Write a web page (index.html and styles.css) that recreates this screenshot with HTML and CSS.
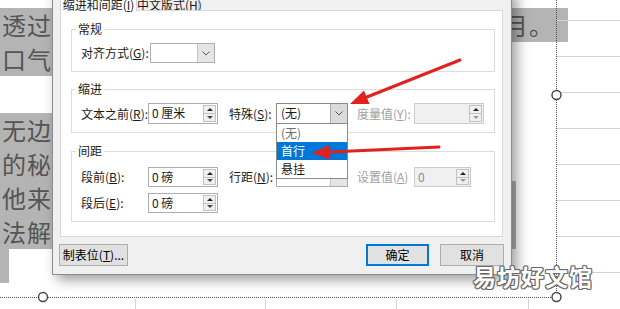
FILE: index.html
```html
<!DOCTYPE html>
<html lang="zh-CN">
<head>
    <meta charset="UTF-8">
    <meta name="viewport" content="width=device-width, initial-scale=1.0">
    <title>段落</title>
    <link rel="stylesheet" href="styles.css">
</head>
<body>
<div class="page">
    <!-- document behind the dialog -->
    <div class="doc">
        <div class="line hl full"><span>透过</span><span class="tail">月。</span></div>
        <div class="line hl w2"><span>口气</span></div>
        <div class="para">
            <div class="line hl w3"><span>无边</span></div>
            <div class="line hl w3"><span>的秘</span></div>
            <div class="line hl w4"><span>他来</span></div>
            <div class="line hl w4"><span>法解</span></div>
            <div class="line"><span class="hl stub"></span></div>
        </div>
    </div>

    <svg class="frame" width="620" height="309" viewBox="0 0 620 309">
        <g stroke="#d3d3d3" stroke-width="1">
            <line x1="557" y1="20.5" x2="620" y2="20.5"/>
            <line x1="557" y1="56.5" x2="620" y2="56.5"/>
            <line x1="557" y1="92.5" x2="620" y2="92.5"/>
            <line x1="557" y1="128.5" x2="620" y2="128.5"/>
            <line x1="557" y1="164.5" x2="620" y2="164.5"/>
            <line x1="557" y1="200.5" x2="620" y2="200.5"/>
            <line x1="557" y1="236.5" x2="620" y2="236.5"/>
            <line x1="557" y1="272.5" x2="620" y2="272.5"/>
            <line x1="135.5" y1="299" x2="135.5" y2="309"/>
            <line x1="265.5" y1="299" x2="265.5" y2="309"/>
            <line x1="396.5" y1="299" x2="396.5" y2="309"/>
            <line x1="528.5" y1="299" x2="528.5" y2="309"/>
        </g>
        <g stroke="#505050" stroke-width="1" stroke-dasharray="1 1" fill="none">
            <line x1="556.5" y1="0" x2="556.5" y2="297"/>
            <line x1="0" y1="297.5" x2="556" y2="297.5"/>
        </g>
        <g fill="#fff" stroke="#444" stroke-width="1.4">
            <circle cx="43" cy="297" r="4.5"/>
            <circle cx="556.5" cy="297" r="4.5"/>
            <circle cx="556.5" cy="95" r="4.5"/>
        </g>
    </svg>

    <div class="dialog">
        <div class="tabs">
            <div class="tab active">缩进和间距(<u>I</u>)</div>
            <div class="tab">中文版式(<u>H</u>)</div>
        </div>

        <div class="panel">
            <fieldset class="group">
                <legend>常规</legend>
                <div class="row">
                    <label>对齐方式(<u>G</u>):</label>
                    <div class="combo short">
                        <span class="val"></span>
                        <span class="drop"><svg width="8" height="5"><polyline points="0.5,0.5 4,4 7.5,0.5" fill="none" stroke="#555"/></svg></span>
                    </div>
                </div>
            </fieldset>

            <fieldset class="group mid">
                <legend>缩进</legend>
                <div class="row">
                    <label>文本之前(<u>R</u>):</label>
                    <div class="spin">
                        <span class="val">0 厘米</span>
                        <span class="spin-btns"><b><i class="up"></i></b><b><i class="down"></i></b></span>
                    </div>
                    <label class="pad">特殊(<u>S</u>):</label>
                    <div class="combo open">
                        <span class="val">(无)</span>
                        <span class="drop hot"><svg width="8" height="5"><polyline points="0.5,0.5 4,4 7.5,0.5" fill="none" stroke="#555"/></svg></span>
                        <div class="list">
                            <div class="dim">(无)</div>
                            <div class="sel">首行</div>
                            <div>悬挂</div>
                        </div>
                    </div>
                    <label class="pad2 off">度量值(<u>Y</u>):</label>
                    <div class="spin dis">
                        <span class="val"></span>
                        <span class="spin-btns"><b><i class="up"></i></b><b><i class="down"></i></b></span>
                    </div>
                </div>
            </fieldset>

            <fieldset class="group last">
                <legend>间距</legend>
                <div class="row">
                    <label>段前(<u>B</u>):</label>
                    <div class="spin">
                        <span class="val">0 磅</span>
                        <span class="spin-btns"><b><i class="up"></i></b><b><i class="down"></i></b></span>
                    </div>
                    <label class="pad">行距(<u>N</u>):</label>
                    <div class="combo">
                        <span class="val"></span>
                        <span class="drop"><svg width="8" height="5"><polyline points="0.5,0.5 4,4 7.5,0.5" fill="none" stroke="#555"/></svg></span>
                    </div>
                    <label class="pad2 off">设置值(<u>A</u>)</label>
                    <div class="spin dis narrow">
                        <span class="val">0</span>
                        <span class="spin-btns"><b><i class="up"></i></b><b><i class="down"></i></b></span>
                    </div>
                </div>
                <div class="row">
                    <label>段后(<u>E</u>):</label>
                    <div class="spin">
                        <span class="val">0 磅</span>
                        <span class="spin-btns"><b><i class="up"></i></b><b><i class="down"></i></b></span>
                    </div>
                </div>
            </fieldset>
        </div>

        <div class="buttons">
            <button class="btn wide">制表位(<u>T</u>)...</button>
            <button class="btn primary">确定</button>
            <button class="btn">取消</button>
        </div>
    </div>

    <svg class="arrows" width="620" height="309" viewBox="0 0 620 309">
        <g stroke="#e3211f" stroke-width="3" stroke-linecap="round" fill="#e3211f">
            <line x1="460" y1="60" x2="367" y2="97"/>
            <line x1="439" y1="147" x2="330" y2="152"/>
        </g>
        <g fill="#e3211f">
            <polygon points="350,104 369.5,104 364,90.5"/>
            <polygon points="312,153 330.5,159.5 329.5,145"/>
        </g>
    </svg>

    <div class="watermark">易坊好文馆</div>
</div>
</body>
</html>
```

FILE: styles.css
```css
* {
    box-sizing: border-box;
}

body {
    margin: 0;
    background: #fff;
    font-family: "Noto Sans CJK SC", "Liberation Sans", sans-serif;
    overflow: hidden;
}

.page {
    position: relative;
    width: 620px;
    height: 309px;
    overflow: hidden;
}

/* document */
.doc {
    padding-top: 8px;
    font-size: 24px;
    line-height: 34px;
    color: #555;
}

.line {
    display: flex;
    height: 34px;
    white-space: nowrap;
}

.line span {
    padding-left: 2px;
    letter-spacing: 1px;
}

.hl {
    background: #b4b4b4;
}

.full {
    width: 568px;
    justify-content: space-between;
}

.tail {
    margin-right: 14px;
}

.w2 {
    width: 300px;
}

.para {
    margin-top: 37px;
}

.w3 {
    width: 400px;
}

.w4 {
    width: 516px;
}

.line .stub {
    width: 9px;
    padding: 0;
}

.frame, .arrows {
    position: absolute;
    left: 0;
    top: 0;
    pointer-events: none;
}

.arrows {
    z-index: 10;
}

/* dialog window */
.dialog {
    position: absolute;
    left: 52px;
    top: -12px;
    width: 460px;
    height: 287px;
    background: #f0f0f0;
    border: 1px solid #8c8c8c;
    border-top: none;
    box-shadow: 5px 5px 12px rgba(0, 0, 0, 0.38);
    font-size: 12px;
    line-height: 16px;
    color: #1a1a1a;
    display: flex;
    flex-direction: column;
}

.tabs {
    display: flex;
    align-items: flex-end;
    height: 22px;
    padding-left: 7px;
}

.tab {
    height: 20px;
    width: 62px;
    padding-top: 6px;
    text-align: center;
    white-space: nowrap;
    background: #f0f0f0;
    border: 1px solid #d9d9d9;
    border-left: none;
    border-bottom: none;
}

.tab.active {
    width: 77px;
    height: 23px;
    padding-top: 8px;
    background: #fff;
    border-left: 1px solid #d9d9d9;
    margin-bottom: -1px;
    position: relative;
    z-index: 1;
}

.panel {
    width: 443px;
    height: 227px;
    margin-left: 7px;
    background: #fff;
    border: 1px solid #d9d9d9;
    padding: 10px 7px 0 10px;
}

.group {
    margin: 0;
    min-width: 0;
    border: 1px solid #dcdcdc;
    padding: 6px 0 8px 9px;
}

.group legend {
    padding: 0 2px;
    margin-left: -5px;
    line-height: 16px;
}

.group.mid {
    margin-top: 9px;
}

.group.mid .row {
    height: 21px;
}

.group.last {
    margin-top: 10px;
    padding-top: 8px;
}

.group.last .row + .row {
    margin-top: 6px;
}

.row {
    display: grid;
    grid-template-columns: 67px 70px 58px 72px 66px 70px;
    align-items: center;
    height: 20px;
}

.row label {
    white-space: nowrap;
}

.row .pad {
    padding-left: 11px;
}

.row .pad2 {
    padding-left: 9px;
}

.off {
    color: #a0a0a0;
}

/* spin boxes */
.spin {
    display: flex;
    height: 100%;
    background: #fff;
    border: 1px solid #abadb3;
}

.spin .val {
    flex: 1;
    padding-left: 3px;
    line-height: 18px;
}

.spin-btns {
    width: 14px;
    display: flex;
    flex-direction: column;
    padding: 1px 1px 1px 0;
}

.spin-btns b {
    flex: 1;
    display: flex;
    align-items: center;
    justify-content: center;
    background: #f0f0f0;
    border: 1px solid #c2c2c2;
}

.spin-btns b + b {
    border-top: none;
}

.up {
    border-left: 3px solid transparent;
    border-right: 3px solid transparent;
    border-bottom: 3px solid #222;
}

.down {
    border-left: 3px solid transparent;
    border-right: 3px solid transparent;
    border-top: 3px solid #444;
}

.spin.dis {
    background: #f0f0f0;
    border-color: #cccccc;
    color: #8c8c8c;
}

.spin.dis .down {
    border-top-color: #999;
}

.spin.narrow {
    width: 57px;
}

/* combo boxes */
.combo {
    position: relative;
    display: flex;
    height: 100%;
    background: #fff;
    border: 1px solid #adadad;
}

.combo.short {
    width: 65px;
    margin-left: 2px;
}

.combo .val {
    flex: 1;
    padding-left: 4px;
    line-height: 18px;
}

.combo .drop {
    width: 17px;
    display: flex;
    align-items: center;
    justify-content: center;
    background: #e5e5e5;
    border-left: 1px solid #c4c4c4;
}

.combo .drop.hot {
    background: #dadada;
    border-left-color: #a8a8a8;
}

.combo.open {
    border-color: #8a8a8a;
}

.list {
    position: absolute;
    left: -1px;
    top: 100%;
    width: 72px;
    background: #fff;
    border: 1px solid #8a8a8a;
    z-index: 5;
}

.list div {
    height: 18px;
    line-height: 18px;
    padding-left: 4px;
}

.list .dim {
    color: #6d6d6d;
}

.list .sel {
    background: #0078d7;
    color: #fff;
}

/* bottom buttons */
.buttons {
    display: flex;
    gap: 11px;
    padding: 7px 7px 0 6px;
}

.btn {
    height: 22px;
    width: 64px;
    padding: 0;
    font: inherit;
    color: #000;
    background: #e1e1e1;
    border: 1px solid #adadad;
}

.btn.wide {
    width: 69px;
    margin-right: auto;
    white-space: nowrap;
}

.btn.primary {
    width: 63px;
    border-color: #0078d7;
    box-shadow: inset 0 0 0 1px #0078d7;
}

/* watermark */
.watermark {
    position: absolute;
    z-index: 10;
    left: 473px;
    top: 262px;
    font-size: 23px;
    line-height: 28px;
    font-weight: bold;
    letter-spacing: 1px;
    color: #fff;
    text-shadow: 1px 0 #6a6a6a, -1px 0 #6a6a6a, 0 1px #6a6a6a, 0 -1px #6a6a6a,
                 1px 1px #6a6a6a, -1px -1px #6a6a6a, 1px -1px #6a6a6a, -1px 1px #6a6a6a;
}
```
